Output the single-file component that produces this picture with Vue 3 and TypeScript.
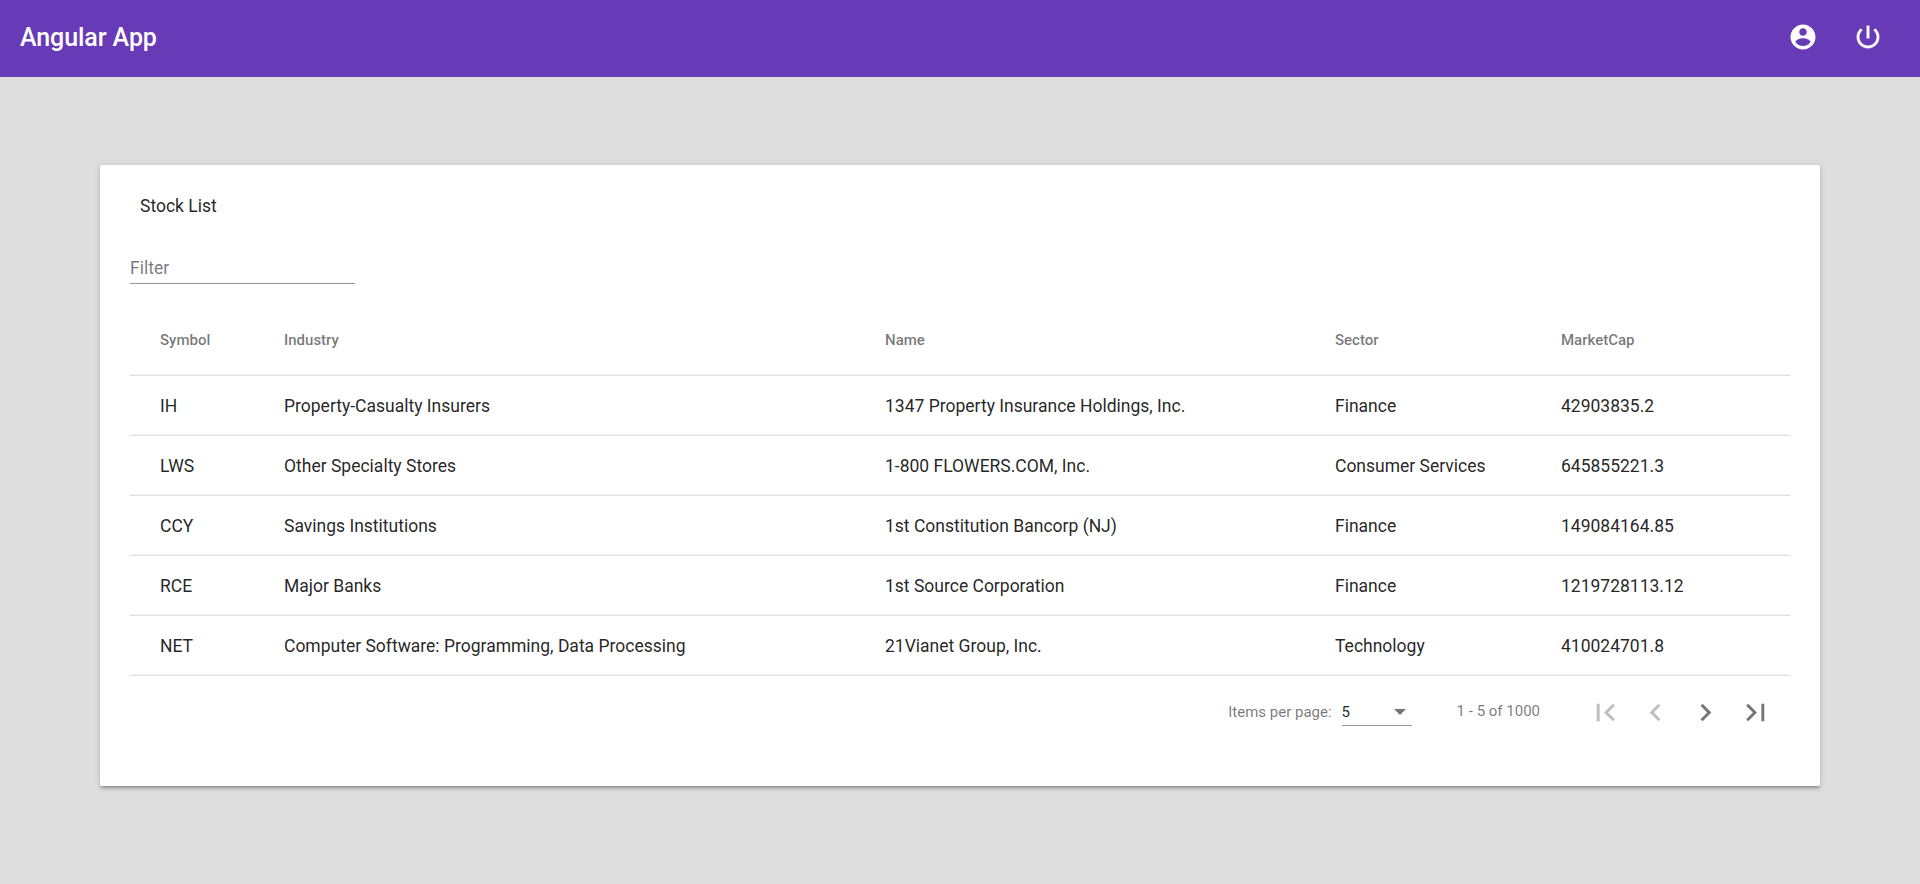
<script setup lang="ts">
import { computed, ref } from 'vue'

interface Stock {
  symbol: string
  industry: string
  name: string
  sector: string
  marketCap: string
}

interface PagerButton {
  label: string
  path: string
  disabled: boolean
}

const stocks: Stock[] = [
  { symbol: 'IH', industry: 'Property-Casualty Insurers', name: '1347 Property Insurance Holdings, Inc.', sector: 'Finance', marketCap: '42903835.2' },
  { symbol: 'LWS', industry: 'Other Specialty Stores', name: '1-800 FLOWERS.COM, Inc.', sector: 'Consumer Services', marketCap: '645855221.3' },
  { symbol: 'CCY', industry: 'Savings Institutions', name: '1st Constitution Bancorp (NJ)', sector: 'Finance', marketCap: '149084164.85' },
  { symbol: 'RCE', industry: 'Major Banks', name: '1st Source Corporation', sector: 'Finance', marketCap: '1219728113.12' },
  { symbol: 'NET', industry: 'Computer Software: Programming, Data Processing', name: '21Vianet Group, Inc.', sector: 'Technology', marketCap: '410024701.8' },
]

const filter = ref('')
const rows = computed(() => {
  const term = filter.value.trim().toLowerCase()
  return stocks.filter((s) => Object.values(s).join(' ').toLowerCase().includes(term))
})

const pager: PagerButton[] = [
  { label: 'First page', path: 'M18.41 16.59L13.82 12l4.59-4.59L17 6l-6 6 6 6zM6 6h2v12H6z', disabled: true },
  { label: 'Previous page', path: 'M15.41 7.41L14 6l-6 6 6 6 1.41-1.41L10.83 12z', disabled: true },
  { label: 'Next page', path: 'M10 6L8.59 7.41 13.17 12l-4.58 4.59L10 18l6-6z', disabled: false },
  { label: 'Last page', path: 'M5.59 7.41L10.18 12l-4.59 4.59L7 18l6-6-6-6zM16 6h2v12h-2z', disabled: false },
]
</script>

<template>
  <div class="app">
    <header class="toolbar">
      <h1 class="brand">Angular App</h1>
      <nav class="actions">
        <button class="action" type="button" aria-label="Account">
          <svg viewBox="0 0 24 24"><path d="M12 2C6.48 2 2 6.48 2 12s4.48 10 10 10 10-4.48 10-10S17.52 2 12 2zm0 3c1.66 0 3 1.34 3 3s-1.34 3-3 3-3-1.34-3-3 1.34-3 3-3zm0 14.2c-2.5 0-4.71-1.28-6-3.22.03-1.99 4-3.08 6-3.08 1.99 0 5.97 1.09 6 3.08-1.29 1.94-3.5 3.22-6 3.22z" /></svg>
        </button>
        <button class="action power" type="button" aria-label="Log out">
          <svg viewBox="0 0 24 24"><path d="M13 3h-2v10h2V3zm4.83 2.17l-1.42 1.42C17.99 7.86 19 9.81 19 12c0 3.87-3.13 7-7 7s-7-3.13-7-7c0-2.19 1.01-4.14 2.58-5.42L6.17 5.17C4.23 6.82 3 9.26 3 12c0 4.97 4.03 9 9 9s9-4.03 9-9c0-2.74-1.23-5.18-3.17-6.83z" /></svg>
        </button>
      </nav>
    </header>

    <main class="card">
      <h2 class="title">Stock List</h2>
      <input v-model="filter" class="filter" type="text" placeholder="Filter" />

      <table class="stocks">
        <colgroup>
          <col class="col-symbol" />
          <col class="col-industry" />
          <col class="col-name" />
          <col class="col-sector" />
          <col />
        </colgroup>
        <thead>
          <tr>
            <th>Symbol</th>
            <th>Industry</th>
            <th>Name</th>
            <th>Sector</th>
            <th>MarketCap</th>
          </tr>
        </thead>
        <tbody>
          <tr v-for="s in rows" :key="s.symbol">
            <td>{{ s.symbol }}</td>
            <td>{{ s.industry }}</td>
            <td>{{ s.name }}</td>
            <td>{{ s.sector }}</td>
            <td>{{ s.marketCap }}</td>
          </tr>
        </tbody>
      </table>

      <footer class="paginator">
        <span class="page-label">Items per page:</span>
        <div class="page-size">
          <span>5</span>
          <svg class="arrow" viewBox="0 0 12 6"><path d="M0 0h12L6 6z" /></svg>
        </div>
        <span class="range">1 - 5 of 1000</span>
        <button v-for="b in pager" :key="b.label" class="page-button" type="button" :aria-label="b.label" :disabled="b.disabled">
          <svg viewBox="0 0 24 24"><path :d="b.path" /></svg>
        </button>
      </footer>
    </main>
  </div>
</template>

<style>
body {
  margin: 0;
  background: #ddd;
}
</style>

<style scoped>
.app {
  min-height: 884px;
  box-sizing: border-box;
  background: #ddd;
  color: rgba(0, 0, 0, 0.87);
  font-family: Roboto, "Liberation Sans", sans-serif;
  font-size: 17.5px;
}

button {
  display: flex;
  align-items: center;
  justify-content: center;
  padding: 0;
  border: 0;
  background: none;
  color: inherit;
}

svg {
  display: block;
  fill: currentColor;
}

.toolbar {
  display: flex;
  align-items: center;
  justify-content: space-between;
  height: 77px;
  box-sizing: border-box;
  padding: 0 27.5px 3px 20px;
  background: #673ab7;
  color: #fff;
}

.brand {
  margin: 2px 0 0;
  font-size: 25px;
  font-weight: 500;
  line-height: 40px;
  letter-spacing: -0.08px;
}

.actions {
  display: flex;
  gap: 15px;
}

.action {
  width: 50px;
  height: 50px;
}

.action svg {
  width: 30px;
  height: 30px;
}

.power path {
  stroke: currentColor;
  stroke-width: 0.3;
}

.card {
  box-sizing: border-box;
  height: 621px;
  margin: 88px 100px 0;
  padding: 30px;
  border-radius: 2.5px;
  background: #fff;
  box-shadow:
    0 3.75px 1.25px -2.5px rgba(0, 0, 0, 0.2),
    0 2.5px 2.5px rgba(0, 0, 0, 0.14),
    0 1.25px 6.25px rgba(0, 0, 0, 0.12);
}

.title {
  margin: 0 10px;
  font-size: 17.5px;
  font-weight: 400;
  line-height: 22px;
}

.filter {
  display: block;
  box-sizing: border-box;
  width: 225px;
  height: 33px;
  margin: 34px 0 0;
  padding: 1px 0 0;
  border: 0;
  border-bottom: 1px solid rgba(0, 0, 0, 0.42);
  outline: 0;
  background: none;
  color: inherit;
  font: inherit;
}

.filter::placeholder {
  color: rgba(0, 0, 0, 0.54);
  opacity: 1;
}

.stocks {
  width: 100%;
  margin-top: 22px;
  border-collapse: separate;
  border-spacing: 0;
  table-layout: fixed;
}

.col-symbol { width: 154px; }
.col-industry { width: 601px; }
.col-name { width: 450px; }
.col-sector { width: 226px; }

.stocks th,
.stocks td {
  box-sizing: border-box;
  height: 60px;
  padding: 0;
  border-bottom: 1px solid rgba(0, 0, 0, 0.12);
  box-shadow: inset 0 -1px rgba(0, 0, 0, 0.03);
  text-align: left;
  font-weight: 400;
}

.stocks th {
  height: 70px;
  padding-bottom: 2px;
  color: rgba(0, 0, 0, 0.54);
  font-size: 15px;
  font-weight: 500;
}

.stocks th:first-child,
.stocks td:first-child {
  padding-left: 30px;
}

.paginator {
  display: flex;
  align-items: center;
  justify-content: flex-end;
  height: 70px;
  margin-top: 1px;
  padding-right: 10px;
  color: rgba(0, 0, 0, 0.54);
  font-size: 15px;
}

.page-label {
  margin-right: 10px;
}

.page-size {
  display: flex;
  align-items: center;
  justify-content: space-between;
  box-sizing: border-box;
  width: 70px;
  height: 28px;
  padding-right: 6px;
  border-bottom: 1px solid rgba(0, 0, 0, 0.42);
  color: rgba(0, 0, 0, 0.87);
}

.arrow {
  width: 12px;
  height: 6px;
  color: rgba(0, 0, 0, 0.54);
}

.range {
  margin: 0 40px 2px 45px;
}

.page-button {
  width: 50px;
  height: 50px;
}

.page-button svg {
  width: 35px;
  height: 35px;
}

.page-button:disabled {
  color: rgba(0, 0, 0, 0.26);
}
</style>
